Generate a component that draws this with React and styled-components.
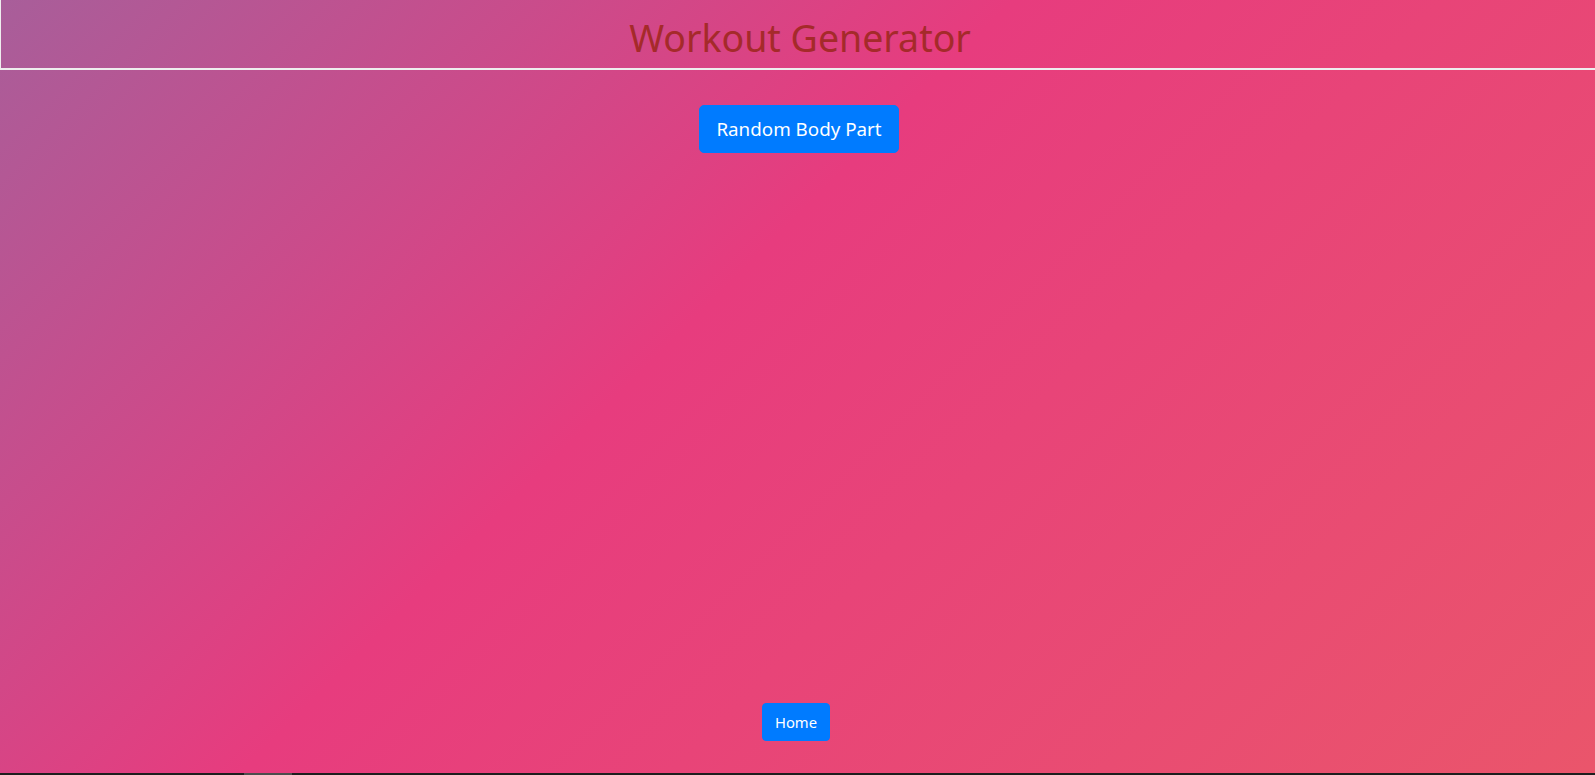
import React from "react";
import styled, { createGlobalStyle } from "styled-components";

const GlobalStyle = createGlobalStyle`
  html, body {
    margin: 0;
    padding: 0;
    overflow: hidden;
  }
  body {
    font-family: "Noto Sans", "Open Sans", sans-serif;
  }
`;

function App() {
  return (
    <>
      <GlobalStyle />
      <Page>
        <Header>
          <Title>Workout Generator</Title>
        </Header>
        <Main>
          <Button size="lg">Random Body Part</Button>
        </Main>
        <Footer>
          <Button>Home</Button>
        </Footer>
        <ScrollTrack>
          <ScrollThumb />
        </ScrollTrack>
      </Page>
    </>
  );
}

export default App;

const Page = styled.div`
  height: 100vh;
  display: flex;
  flex-direction: column;
  /* snapshot of the animated -45deg gradient (#ee7752, #e73c7e, #23a6d5) */
  background: linear-gradient(
    135deg,
    #23a6d5 -90.5%,
    #e73c7e 42.8%,
    #ee7752 176.2%
  );
`;

const Header = styled.header`
  height: 68px;
  display: flex;
  align-items: center;
  justify-content: center;
  border-left: 1px solid #eeeeee;
  border-bottom: 2px solid #eeeeee;
`;

const Title = styled.h1`
  margin: 6px 0 0;
  padding-left: 4px;
  font-size: 37.5px;
  font-weight: 400;
  line-height: 1.2;
  color: #a52a2a;
`;

const Main = styled.main`
  flex: 1;
  display: flex;
  justify-content: center;
  align-items: flex-start;
  padding-top: 35px;
  padding-left: 3px;
`;

const Footer = styled.footer`
  display: flex;
  justify-content: center;
  padding-bottom: 32px;
  padding-right: 3px;
`;

const Button = styled.button`
  font-family: "Noto Sans", "Open Sans", sans-serif;
  color: #ffffff;
  background-color: #007bff;
  border: 1px solid #007bff;
  cursor: pointer;
  border-radius: ${(p) => (p.size === "lg" ? "5px" : "4px")};
  font-size: ${(p) => (p.size === "lg" ? "18.8px" : "14.8px")};
  line-height: ${(p) => (p.size === "lg" ? "30px" : "24px")};
  padding: ${(p) => (p.size === "lg" ? "8px 16px" : "6px 12px")};
`;

const ScrollTrack = styled.div`
  height: 2px;
  background: #1e1e1e;
  display: flex;
  padding-left: 244px;
`;

const ScrollThumb = styled.div`
  width: 48px;
  background: #4d4d4d;
`;
